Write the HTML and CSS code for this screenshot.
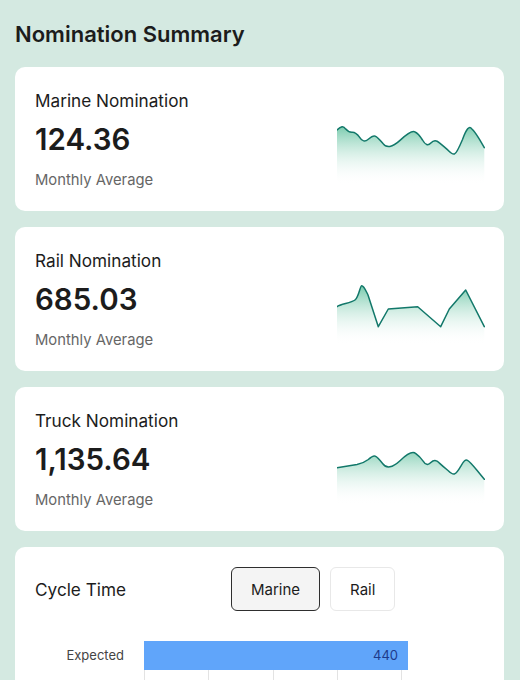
FILE: index.html
```html
<!DOCTYPE html>
<html lang="en">
<head>
    <meta charset="UTF-8">
    <meta name="viewport" content="width=device-width, initial-scale=1.0">
    <title>Nomination Summary</title>
    <link rel="stylesheet" href="styles.css">
</head>
<body>
    <h1 class="page-title">Nomination Summary</h1>

    <div class="card stat-card">
        <div class="stat-text">
            <div class="stat-label">Marine Nomination</div>
            <div class="stat-value">124.36</div>
            <div class="stat-note">Monthly Average</div>
        </div>
        <svg class="spark" viewBox="0 0 148 65">
            <defs>
                <linearGradient id="fillMarine" gradientUnits="userSpaceOnUse" x1="0" y1="0" x2="0" y2="65">
                    <stop offset="0" stop-color="#3fb48a" stop-opacity="0.85"/>
                    <stop offset="1" stop-color="#ffffff" stop-opacity="0"/>
                </linearGradient>
            </defs>
            <path class="spark-area" fill="url(#fillMarine)" d="M0 10 Q5.7 4 8.5 8.8 Q11.3 12.3 15.15 12.15 Q19 12 22.65 17.35 Q26.3 23.5 31.3 19.2 Q36.3 15 38.3 16.2 Q40.3 16.7 45.8 23.35 Q51.3 31 63 20.35 Q74.7 9.5 78 12 Q81.3 13.3 85.5 20 Q89.7 27.5 93.85 23 Q98 18.5 102.15 22.65 Q106.3 26 111 30.15 Q115.7 35 117.7 33.8 Q119.7 33.3 125.5 19.5 Q131.3 3.5 134.65 8.7 Q138 11.7 142.65 19.7 L147.3 27.7 L147.3 65 L0 65 Z"/>
            <path class="spark-line" d="M0 10 Q5.7 4 8.5 8.8 Q11.3 12.3 15.15 12.15 Q19 12 22.65 17.35 Q26.3 23.5 31.3 19.2 Q36.3 15 38.3 16.2 Q40.3 16.7 45.8 23.35 Q51.3 31 63 20.35 Q74.7 9.5 78 12 Q81.3 13.3 85.5 20 Q89.7 27.5 93.85 23 Q98 18.5 102.15 22.65 Q106.3 26 111 30.15 Q115.7 35 117.7 33.8 Q119.7 33.3 125.5 19.5 Q131.3 3.5 134.65 8.7 Q138 11.7 142.65 19.7 L147.3 27.7"/>
        </svg>
    </div>

    <div class="card stat-card">
        <div class="stat-text">
            <div class="stat-label">Rail Nomination</div>
            <div class="stat-value">685.03</div>
            <div class="stat-note">Monthly Average</div>
        </div>
        <svg class="spark" viewBox="0 0 148 65">
            <defs>
                <linearGradient id="fillRail" gradientUnits="userSpaceOnUse" x1="0" y1="0" x2="0" y2="65">
                    <stop offset="0" stop-color="#3fb48a" stop-opacity="0.85"/>
                    <stop offset="1" stop-color="#ffffff" stop-opacity="0"/>
                </linearGradient>
            </defs>
            <path class="spark-area" fill="url(#fillRail)" d="M0 26.7 C4 24 14 23 18 20 C22 17 23 5.7 24.7 5.7 C27 5.7 29 11 31 15 L41.3 46.7 L51.3 29 L80.7 26.7 L103.7 46.7 L112.3 29 L128.7 10 L147.3 46.7 L147.3 65 L0 65 Z"/>
            <path class="spark-line" d="M0 26.7 C4 24 14 23 18 20 C22 17 23 5.7 24.7 5.7 C27 5.7 29 11 31 15 L41.3 46.7 L51.3 29 L80.7 26.7 L103.7 46.7 L112.3 29 L128.7 10 L147.3 46.7"/>
        </svg>
    </div>

    <div class="card stat-card">
        <div class="stat-text">
            <div class="stat-label">Truck Nomination</div>
            <div class="stat-value">1,135.64</div>
            <div class="stat-note">Monthly Average</div>
        </div>
        <svg class="spark" viewBox="0 0 148 65">
            <defs>
                <linearGradient id="fillTruck" gradientUnits="userSpaceOnUse" x1="0" y1="0" x2="0" y2="65">
                    <stop offset="0" stop-color="#3fb48a" stop-opacity="0.85"/>
                    <stop offset="1" stop-color="#ffffff" stop-opacity="0"/>
                </linearGradient>
            </defs>
            <path class="spark-area" fill="url(#fillTruck)" d="M0 27.7 L20 24.5 Q26.3 23.3 31.3 19.5 Q36.3 15 38.3 16.2 Q40.3 16.7 45.8 23.7 Q51.3 31.5 63 20.7 Q74.7 9.5 78.85 13.7 Q83 16.7 86.35 21.35 Q89.7 26.8 93.85 22.5 Q98 18.3 102.15 22.85 Q106.3 26.7 111 30.5 Q115.7 35 117.7 33.8 Q119.7 33.3 123.85 26.15 Q128 18.3 130.5 20.35 Q133 21.7 140.15 30.5 L147.3 39.3 L147.3 65 L0 65 Z"/>
            <path class="spark-line" d="M0 27.7 L20 24.5 Q26.3 23.3 31.3 19.5 Q36.3 15 38.3 16.2 Q40.3 16.7 45.8 23.7 Q51.3 31.5 63 20.7 Q74.7 9.5 78.85 13.7 Q83 16.7 86.35 21.35 Q89.7 26.8 93.85 22.5 Q98 18.3 102.15 22.85 Q106.3 26.7 111 30.5 Q115.7 35 117.7 33.8 Q119.7 33.3 123.85 26.15 Q128 18.3 130.5 20.35 Q133 21.7 140.15 30.5 L147.3 39.3"/>
        </svg>
    </div>

    <div class="card cycle-card">
        <div class="cycle-head">
            <div class="cycle-title">Cycle Time</div>
            <div class="toggle">
                <button class="toggle-btn active">Marine</button>
                <button class="toggle-btn">Rail</button>
            </div>
        </div>
        <div class="bars">
            <div class="bar-label">Expected</div>
            <div class="bar-track"><div class="bar" style="width: 97.8%">440</div></div>
        </div>
    </div>
</body>
</html>
```

FILE: styles.css
```css
body {
    margin: 0;
    padding: 20px 16px 20px 15px;
    background: #d4e9e1;
    font-family: Inter, 'Noto Sans', sans-serif;
    color: #1c1c1c;
}

.page-title {
    font-size: 22px;
    font-weight: 600;
    line-height: 29px;
    margin: 0 0 18px;
}

.card {
    background: white;
    border-radius: 10px;
    padding: 20px;
    margin-bottom: 16px;
}

.stat-card {
    display: flex;
    justify-content: space-between;
    height: 104px;
    padding: 22px 20px 18px;
}

.stat-label {
    font-size: 17.2px;
    line-height: 24px;
}

.stat-value {
    font-size: 29.5px;
    font-weight: 600;
    line-height: 35px;
    margin-top: 9px;
}

.stat-note {
    font-size: 14.8px;
    line-height: 22px;
    color: #666;
    margin-top: 12px;
}

.spark {
    width: 148px;
    height: 65px;
    margin-top: 31px;
    margin-right: -1px;
}

.spark-line {
    fill: none;
    stroke: #12786a;
    stroke-width: 1.5;
    stroke-linejoin: round;
    stroke-linecap: round;
}

.cycle-head {
    display: flex;
    align-items: center;
}

.cycle-title {
    width: 196px;
    font-size: 17.2px;
}

.toggle {
    display: flex;
    gap: 10px;
}

.toggle-btn {
    height: 44px;
    padding: 0 19px;
    font-family: Inter, 'Noto Sans', sans-serif;
    font-size: 15px;
    color: #1c1c1c;
    background: white;
    border: 1.5px solid #e8e8e8;
    border-radius: 6px;
    cursor: pointer;
}

.toggle-btn.active {
    background: #f4f4f4;
    border-color: #2e2e2e;
}

.bars {
    display: grid;
    grid-template-columns: 89px 270px;
    column-gap: 20px;
    margin-top: 30px;
}

.bar-label {
    font-size: 13px;
    line-height: 29px;
    color: #444;
    text-align: right;
}

.bar-track {
    height: 29px;
    padding-bottom: 60px;
    background: repeating-linear-gradient(to right, #e3e3e3 0 1px, transparent 1px 64.3px);
}

.bar {
    height: 29px;
    background: #60a5fa;
    color: #1e3a8a;
    font-size: 13px;
    line-height: 29px;
    text-align: right;
    padding-right: 10px;
    box-sizing: border-box;
}
```
